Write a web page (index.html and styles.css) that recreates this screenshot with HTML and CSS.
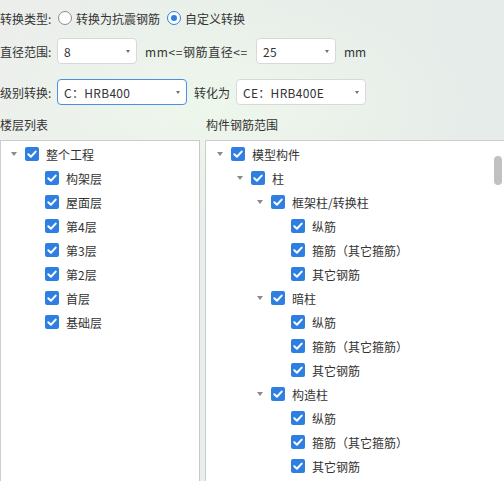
FILE: index.html
```html
<!DOCTYPE html>
<html lang="zh-CN">
<head>
<meta charset="utf-8">
<title>钢筋转换</title>
<link rel="stylesheet" href="styles.css">
</head>
<body>
<div class="page">
  <div class="row r1">
    <span class="lbl">转换类型:</span>
    <label class="radio"><span class="circle"></span><span>转换为抗震钢筋</span></label>
    <label class="radio on"><span class="circle"></span><span>自定义转换</span></label>
  </div>
  <div class="row r2">
    <span class="lbl">直径范围:</span>
    <div class="sel s80"><span>8</span><i class="caret"></i></div>
    <span class="txt mid gap-l8">mm&lt;=钢筋直径&lt;=</span>
    <div class="sel s80 gap-l7"><span>25</span><i class="caret"></i></div>
    <span class="txt gap-l8">mm</span>
  </div>
  <div class="row r3">
    <span class="lbl">级别转换:</span>
    <div class="sel s130 focus"><span>C：HRB400</span><i class="caret"></i></div>
    <span class="txt to gap-l7">转化为</span>
    <div class="sel s130 gap-l7"><span>CE：HRB400E</span><i class="caret"></i></div>
  </div>

  <div class="panels">
    <div class="col col-left">
      <div class="title">楼层列表</div>
      <div class="box">
        <div class="tree">
          <div class="node l0"><i class="arrow"></i><i class="cb"></i><span>整个工程</span></div>
          <div class="node l1"><i class="arrow none"></i><i class="cb"></i><span>构架层</span></div>
          <div class="node l1"><i class="arrow none"></i><i class="cb"></i><span>屋面层</span></div>
          <div class="node l1"><i class="arrow none"></i><i class="cb"></i><span>第4层</span></div>
          <div class="node l1"><i class="arrow none"></i><i class="cb"></i><span>第3层</span></div>
          <div class="node l1"><i class="arrow none"></i><i class="cb"></i><span>第2层</span></div>
          <div class="node l1"><i class="arrow none"></i><i class="cb"></i><span>首层</span></div>
          <div class="node l1"><i class="arrow none"></i><i class="cb"></i><span>基础层</span></div>
        </div>
      </div>
    </div>
    <div class="col col-right">
      <div class="title">构件钢筋范围</div>
      <div class="box">
        <div class="tree">
          <div class="node l0"><i class="arrow"></i><i class="cb"></i><span>模型构件</span></div>
          <div class="node l1"><i class="arrow"></i><i class="cb"></i><span>柱</span></div>
          <div class="node l2"><i class="arrow"></i><i class="cb"></i><span>框架柱/转换柱</span></div>
          <div class="node l3"><i class="arrow none"></i><i class="cb"></i><span>纵筋</span></div>
          <div class="node l3"><i class="arrow none"></i><i class="cb"></i><span>箍筋（其它箍筋）</span></div>
          <div class="node l3"><i class="arrow none"></i><i class="cb"></i><span>其它钢筋</span></div>
          <div class="node l2"><i class="arrow"></i><i class="cb"></i><span>暗柱</span></div>
          <div class="node l3"><i class="arrow none"></i><i class="cb"></i><span>纵筋</span></div>
          <div class="node l3"><i class="arrow none"></i><i class="cb"></i><span>箍筋（其它箍筋）</span></div>
          <div class="node l3"><i class="arrow none"></i><i class="cb"></i><span>其它钢筋</span></div>
          <div class="node l2"><i class="arrow"></i><i class="cb"></i><span>构造柱</span></div>
          <div class="node l3"><i class="arrow none"></i><i class="cb"></i><span>纵筋</span></div>
          <div class="node l3"><i class="arrow none"></i><i class="cb"></i><span>箍筋（其它箍筋）</span></div>
          <div class="node l3"><i class="arrow none"></i><i class="cb"></i><span>其它钢筋</span></div>
        </div>
        <div class="thumb"></div>
      </div>
    </div>
  </div>
</div>
</body>
</html>
```

FILE: styles.css
```css
html, body {
  margin: 0;
  padding: 0;
  width: 504px;
  height: 481px;
  overflow: hidden;
}

body {
  font-family: "Noto Sans CJK SC", "Microsoft YaHei", "Noto Sans", sans-serif;
  font-size: 12px;
  color: #333;
  background:
    radial-gradient(ellipse 260px 120px at 210px 105px, #eef7ec 0%, rgba(238, 247, 236, 0) 100%),
    linear-gradient(90deg, #eceeec 0%, #e8eee9 40%, #e6ece9 100%);
}

.page {
  display: flex;
  flex-direction: column;
}

.row {
  display: flex;
  align-items: center;
}

.r1 { height: 36px; }
.r2 { height: 26px; margin-top: 2px; }
.r3 { height: 26px; margin-top: 15px; }

.lbl {
  width: 57px;
  flex: none;
  white-space: nowrap;
}

.r1 .lbl { width: 58px; }

.radio {
  display: flex;
  align-items: center;
  gap: 4px;
  margin-right: 7px;
}

.circle {
  width: 12px;
  height: 12px;
  border: 1px solid #8c8c8c;
  border-radius: 50%;
  background: #fff;
  position: relative;
  flex: none;
}

.radio.on .circle {
  border-color: #2f7ee2;
}

.radio.on .circle::after {
  content: "";
  position: absolute;
  left: 3px;
  top: 3px;
  width: 6px;
  height: 6px;
  border-radius: 50%;
  background: #2f7ee2;
}

.sel {
  box-sizing: border-box;
  height: 26px;
  background: #fff;
  border: 1px solid #d8d8d8;
  border-radius: 4px;
  display: flex;
  align-items: center;
  justify-content: space-between;
  padding: 0 6px 0 6px;
  flex: none;
  color: #333;
}

.sel.focus {
  border-color: #4d8fe3;
}

.s80 { width: 80px; }
.s130 { width: 130px; }

.sel span { letter-spacing: 0.3px; }

.caret {
  width: 0;
  height: 0;
  border-left: 2.5px solid transparent;
  border-right: 2.5px solid transparent;
  border-top: 3px solid #707070;
}

.gap-l8 { margin-left: 8px; }
.gap-l7 { margin-left: 7px; }

.txt { white-space: nowrap; flex: none; }

.mid {
  width: 104px;
  letter-spacing: 0.6px;
}

.to { width: 35px; }

.panels {
  display: flex;
  gap: 5px;
}

.col-left { width: 200px; flex: none; }
.col-right { width: 300px; flex: none; }

.title {
  height: 26px;
  line-height: 26px;
  margin-top: 7px;
  margin-bottom: 2px;
  white-space: nowrap;
}

.col-right .title { padding-left: 1px; }

.box {
  position: relative;
  box-sizing: border-box;
  height: 360px;
  background: #fff;
  border: 1px solid #cdcdcd;
}

.col-left .box { border-right-color: #c8c8c8; }

.tree {
  padding-top: 1px;
  padding-left: 6px;
}

.col-right .tree { padding-left: 7px; }

.node {
  height: 24px;
  display: flex;
  align-items: center;
  white-space: nowrap;
}

.l1 { padding-left: 20px; }
.l2 { padding-left: 40px; }
.l3 { padding-left: 60px; }

.arrow {
  width: 14px;
  height: 14px;
  flex: none;
  position: relative;
  margin-right: 4px;
}

.arrow::after {
  content: "";
  position: absolute;
  left: 4px;
  top: 5px;
  border-left: 3.5px solid transparent;
  border-right: 3.5px solid transparent;
  border-top: 4px solid #8a8a8a;
}

.arrow.none::after { display: none; }

.cb {
  width: 14px;
  height: 14px;
  flex: none;
  border-radius: 2px;
  background-color: #2f7ee2;
  margin-right: 7px;
  background-image: url("data:image/svg+xml;utf8,<svg xmlns='http://www.w3.org/2000/svg' width='14' height='14' viewBox='0 0 14 14'><path d='M3.3 7.3 L5.9 9.7 L10.7 4.6' fill='none' stroke='white' stroke-width='2' stroke-linecap='round' stroke-linejoin='round'/></svg>");
  background-repeat: no-repeat;
}

.thumb {
  position: absolute;
  right: 2px;
  top: 15px;
  width: 8px;
  height: 29px;
  border-radius: 4px;
  background: #c1c1c1;
}
```
